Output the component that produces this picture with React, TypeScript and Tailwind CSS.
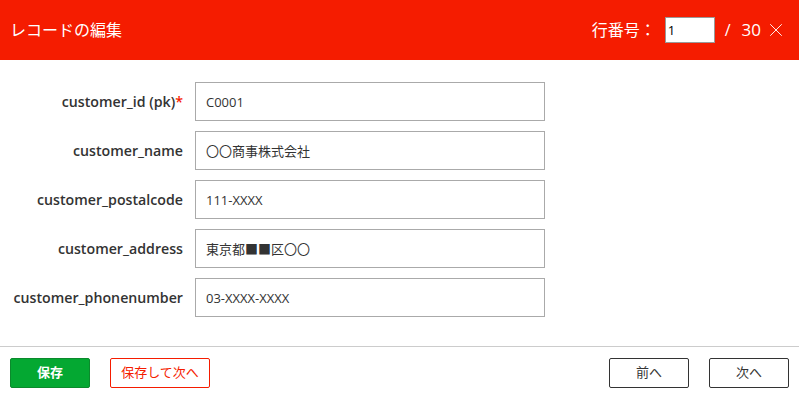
import { X } from 'lucide-react';

const fields = [
    { label: 'customer_id (pk)', value: 'C0001', required: true },
    { label: 'customer_name', value: '〇〇商事株式会社' },
    { label: 'customer_postalcode', value: '111-XXXX' },
    { label: 'customer_address', value: '東京都■■区〇〇' },
    { label: 'customer_phonenumber', value: '03-XXXX-XXXX' },
];

const font = { fontFamily: '"Open Sans", "Noto Sans CJK JP", sans-serif' };

export default function App() {
    return (
        <div className="w-[799px] h-[406px] bg-white flex flex-col" style={font}>
            {/* Header */}
            <div className="h-[60px] bg-[#f51c00] flex items-center justify-between pl-[10px] pr-[12px] text-white">
                <h1 className="text-[16px]">レコードの編集</h1>
                <div className="flex items-center text-[16px]">
                    <span>行番号：</span>
                    <input
                        defaultValue="1"
                        className="ml-[9px] w-[50px] h-[26px] bg-white border border-[#999] text-black text-[13px] px-[2px] outline-none"
                    />
                    <span className="ml-[10px]">/</span>
                    <span className="ml-[11px] text-[17px]">30</span>
                    <X className="ml-[4px] w-[22px] h-[22px]" strokeWidth={1} />
                </div>
            </div>

            {/* Form */}
            <div className="flex flex-col gap-[10px] pt-[22px]">
                {fields.map((f) => (
                    <div key={f.label} className="flex items-center">
                        <label className="w-[183px] text-right text-[14.2px] font-semibold text-[#333]">
                            {f.label}
                            {f.required && <span className="text-[#f51c00]">*</span>}
                        </label>
                        <input
                            defaultValue={f.value}
                            className="ml-[12px] w-[350px] h-[39px] border border-[#aaa] px-[10px] text-[13px] text-[#333] outline-none"
                        />
                    </div>
                ))}
            </div>

            {/* Footer */}
            <div className="mt-[29px] border-t border-[#ccc] flex items-center justify-between px-[10px] pt-[11px]">
                <div className="flex gap-[20px]">
                    <button className="w-[80px] h-[30px] bg-[#04a832] border border-[#0b8a2c] rounded-[2px] text-white text-[13px] font-bold">
                        保存
                    </button>
                    <button className="w-[100px] h-[30px] bg-white border border-[#f51c00] rounded-[2px] text-[#f51c00] text-[13px]">
                        保存して次へ
                    </button>
                </div>
                <div className="flex gap-[20px]">
                    <button className="w-[80px] h-[30px] bg-white border border-[#333] rounded-[2px] text-[#333] text-[13px]">
                        前へ
                    </button>
                    <button className="w-[80px] h-[30px] bg-white border border-[#333] rounded-[2px] text-[#333] text-[13px]">
                        次へ
                    </button>
                </div>
            </div>
        </div>
    );
}
